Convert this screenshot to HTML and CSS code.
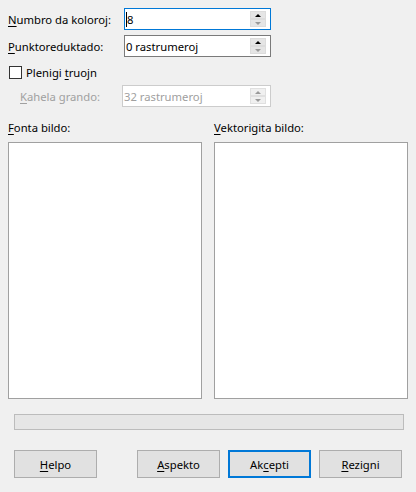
FILE: index.html
```html
<!DOCTYPE html>
<html>
<head>
<meta charset="utf-8">
<link rel="stylesheet" href="styles.css">
</head>
<body>
<div class="dialog">
  <div class="form">
    <div class="row">
      <label class="lbl"><u>N</u>umbro da koloroj:</label>
      <div class="spin focus">
        <div class="val"><span class="caret"></span>8</div>
        <div class="btns"><div class="b up"><i></i></div><div class="b down"><i></i></div></div>
      </div>
    </div>
    <div class="row">
      <label class="lbl"><u>P</u>unktoreduktado:</label>
      <div class="spin">
        <div class="val">0 rastrumeroj</div>
        <div class="btns"><div class="b up"><i></i></div><div class="b down"><i></i></div></div>
      </div>
    </div>
    <div class="row chkrow">
      <span class="chk"></span><span>Plenigi <u>t</u>ruojn</span>
    </div>
    <div class="row">
      <label class="lbl dis indent"><u>K</u>ahela grando:</label>
      <div class="spin disabled">
        <div class="val">32 rastrumeroj</div>
        <div class="btns"><div class="b up"><i></i></div><div class="b down"><i></i></div></div>
      </div>
    </div>
  </div>
  <div class="previews">
    <div class="pcol">
      <div class="plbl"><u>F</u>onta bildo:</div>
      <div class="pbox"></div>
    </div>
    <div class="pcol">
      <div class="plbl"><u>V</u>ektorigita bildo:</div>
      <div class="pbox"></div>
    </div>
  </div>
  <div class="progress"></div>
  <div class="buttons">
    <button class="btn"><u>H</u>elpo</button>
    <div class="right">
      <button class="btn"><u>A</u>spekto</button>
      <button class="btn default">Ak<u>c</u>epti</button>
      <button class="btn"><u>R</u>ezigni</button>
    </div>
  </div>
</div>
</body>
</html>
```

FILE: styles.css
```css
* { box-sizing: border-box; }
html, body { margin: 0; padding: 0; }
body {
  width: 416px;
  height: 492px;
  background: #f0f0f0;
  font-family: "Noto Sans", "Open Sans", sans-serif;
  font-size: 11.25px;
  color: #000;
  overflow: hidden;
}
u { text-decoration: underline; text-underline-offset: 2px; }
.dialog { padding: 8px 8px 0 8px; }
.form { display: flex; flex-direction: column; gap: 5px; }
.row { display: flex; align-items: center; height: 22px; }
.lbl { width: 116px; flex: none; }
.lbl.indent { padding-left: 12px; width: 114px; }
.dis { color: #a0a0a0; }
.spin {
  width: 147px;
  height: 22px;
  border: 1px solid #7a7a7a;
  background: #fff;
  display: flex;
  align-items: stretch;
  padding: 2px 4px 2px 1px;
}
.spin.focus { border-color: #0078d7; }
.spin.disabled { border-color: #cccccc; color: #a0a0a0; width: 149px; }
.val { flex: 1; display: flex; align-items: center; }
.caret { display: inline-block; width: 1px; height: 15px; background: #000; }
.btns { width: 16px; display: flex; flex-direction: column; }
.b {
  height: 8px;
  background: #e5e5e5;
  border: 1px solid #dcdcdc;
  display: flex;
  align-items: center;
  justify-content: center;
}
.b i { display: block; width: 0; height: 0; border-left: 3px solid transparent; border-right: 3px solid transparent; }
.up i { border-bottom: 3px solid #000; }
.down i { border-top: 3px solid #999; }
.disabled .b { background: #f0f0f0; border-color: #e0e0e0; }
.disabled .up i { border-bottom-color: #9a9a9a; }
.disabled .down i { border-top-color: #9a9a9a; }
.chkrow { gap: 4px; padding-left: 1px; height: 18px; padding-top: 2px; }
.chk { width: 13px; height: 13px; border: 1px solid #333; background: #fff; }
.previews { display: flex; gap: 12px; margin-top: 13px; }
.pcol { display: flex; flex-direction: column; }
.plbl { height: 16px; line-height: 16px; margin-bottom: 6px; }
.pbox { width: 194px; height: 257px; background: #fff; border: 1px solid #a0a0a0; }
.progress {
  margin: 15px 4px 0 6px;
  height: 16px;
  background: #e6e6e6;
  border: 1px solid #bcbcbc;
}
.buttons { display: flex; justify-content: space-between; margin: 20px 0 0 6px; padding-right: 6px; }
.right { display: flex; gap: 8px; }
.btn {
  width: 83px;
  height: 28px;
  background: #e1e1e1;
  border: 1px solid #adadad;
  font-family: inherit;
  font-size: 11.25px;
  color: #000;
  padding: 0;
  margin: 0;
}
.btn.default { border: 2px solid #0078d7; }
```
